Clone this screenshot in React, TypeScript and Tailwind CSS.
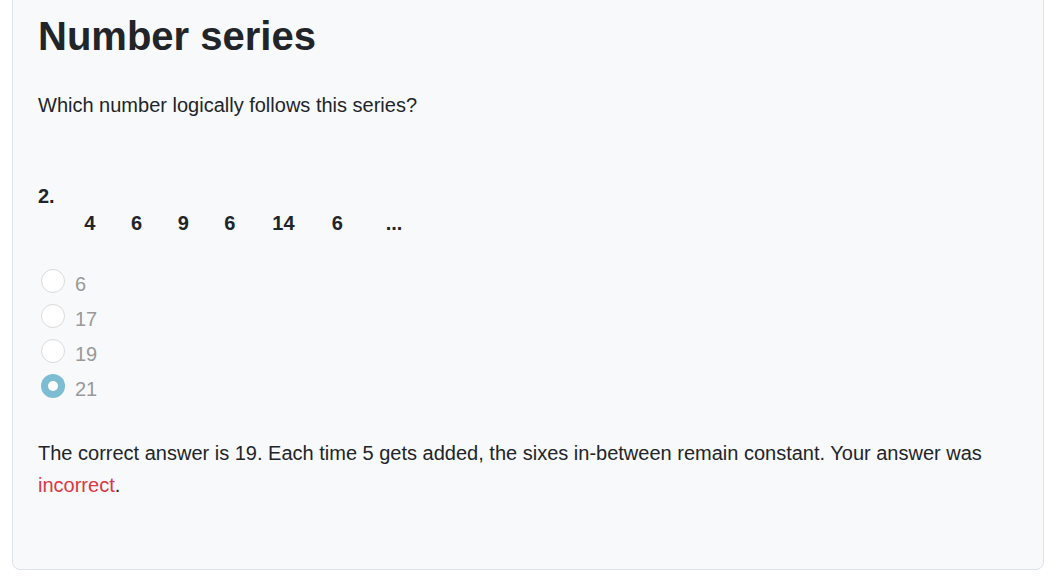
import React from 'react';

const series = [
  { v: '4', w: 'w-[46.7px]' },
  { v: '6', w: 'w-[46.7px]' },
  { v: '9', w: 'w-[46.6px]' },
  { v: '6', w: 'w-[48px]' },
  { v: '14', w: 'w-[59.4px]' },
  { v: '6', w: 'w-[54px]' },
  { v: '...', w: '' },
];

const options = [
  { label: '6', checked: false },
  { label: '17', checked: false },
  { label: '19', checked: false },
  { label: '21', checked: true },
];

function Radio({ checked }: { checked: boolean }) {
  if (checked) {
    return (
      <span className="flex items-center justify-center w-6 h-6 rounded-full bg-[#7dbdd4]">
        <span className="w-[10px] h-[10px] rounded-full bg-white" />
      </span>
    );
  }
  return <span className="block w-6 h-6 rounded-full bg-white border border-[#dadada]" />;
}

export default function App() {
  return (
    <div className="min-h-screen bg-white font-['Liberation_Sans',Arial,sans-serif] text-[#212529]">
      <div className="mx-[12px] w-[1032px] -mt-4 bg-[#f8f9fa] border border-[#dee2e6] rounded-lg px-[25px] pt-[27px] pb-[68px]">
        {/* Title */}
        <h1 className="text-[40px] leading-[48px] font-bold">Number series</h1>

        <p className="mt-[29px] text-[20px] leading-[32px]">Which number logically follows this series?</p>

        {/* Question */}
        <div className="mt-[61px] text-[20px] leading-[28px] font-bold">
          <div>2.</div>
          <div className="flex -mt-px pl-[46.3px]">
            {series.map((s, i) => (
              <span key={i} className={s.w}>{s.v}</span>
            ))}
          </div>
        </div>

        {/* Options */}
        <div className="mt-[30px] flex flex-col">
          {options.map((o) => (
            <label key={o.label} className="flex items-center h-[35px] text-[20px] leading-[35px] text-[#999999]">
              <span className="ml-[3px] -mt-[7px]">
                <Radio checked={o.checked} />
              </span>
              <span className="ml-[10px]">{o.label}</span>
            </label>
          ))}
        </div>

        {/* Feedback */}
        <p className="mt-[30px] text-[20px] leading-[32px]">
          The correct answer is 19. Each time 5 gets added, the sixes in-between remain constant. Your answer was{' '}
          <span className="text-[#dc3545]">incorrect</span>.
        </p>
      </div>
    </div>
  );
}
